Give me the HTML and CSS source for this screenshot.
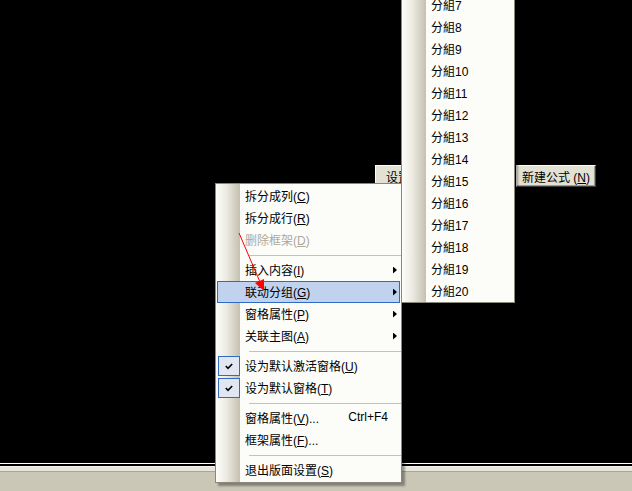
FILE: index.html
```html
<!DOCTYPE html>
<html lang="zh-CN">
<head>
  <meta charset="UTF-8" />
  <title>版面设置</title>
  <link rel="stylesheet" href="styles.css">
</head>
<body>
  <div class="stage">
    <div class="tool-row">
      <button class="tool-btn narrow">设置</button>
      <button class="tool-btn">新建公式 (<u>N</u>)</button>
    </div>

    <div class="menu main-menu">
      <div class="item"><span class="slot"></span><span class="label">拆分成列(<u>C</u>)</span></div>
      <div class="item"><span class="slot"></span><span class="label">拆分成行(<u>R</u>)</span></div>
      <div class="item disabled"><span class="slot"></span><span class="label">删除框架(<u>D</u>)</span></div>
      <div class="sep"></div>
      <div class="item"><span class="slot"></span><span class="label">插入内容(<u>I</u>)</span><span class="more"></span></div>
      <div class="item hover"><span class="slot"></span><span class="label">联动分组(<u>G</u>)</span><span class="more"></span></div>
      <div class="item"><span class="slot"></span><span class="label">窗格属性(<u>P</u>)</span><span class="more"></span></div>
      <div class="item"><span class="slot"></span><span class="label">关联主图(<u>A</u>)</span><span class="more"></span></div>
      <div class="sep"></div>
      <div class="item">
        <span class="slot checked"><svg width="8" height="7" viewBox="0 0 8 7"><path d="M0.8 3 L3 5.3 L7.2 1" fill="none" stroke="#000" stroke-width="1.6"/></svg></span>
        <span class="label">设为默认激活窗格(<u>U</u>)</span>
      </div>
      <div class="item">
        <span class="slot checked"><svg width="8" height="7" viewBox="0 0 8 7"><path d="M0.8 3 L3 5.3 L7.2 1" fill="none" stroke="#000" stroke-width="1.6"/></svg></span>
        <span class="label">设为默认窗格(<u>T</u>)</span>
      </div>
      <div class="sep"></div>
      <div class="item"><span class="slot"></span><span class="label">窗格属性(<u>V</u>)...</span><span class="key">Ctrl+F4</span></div>
      <div class="item"><span class="slot"></span><span class="label">框架属性(<u>F</u>)...</span></div>
      <div class="sep"></div>
      <div class="item"><span class="slot"></span><span class="label">退出版面设置(<u>S</u>)</span></div>
    </div>

    <div class="menu sub-menu">
      <div class="item"><span class="slot"></span><span class="label">分組7</span></div>
      <div class="item"><span class="slot"></span><span class="label">分組8</span></div>
      <div class="item"><span class="slot"></span><span class="label">分組9</span></div>
      <div class="item"><span class="slot"></span><span class="label">分組10</span></div>
      <div class="item"><span class="slot"></span><span class="label">分組11</span></div>
      <div class="item"><span class="slot"></span><span class="label">分組12</span></div>
      <div class="item"><span class="slot"></span><span class="label">分組13</span></div>
      <div class="item"><span class="slot"></span><span class="label">分組14</span></div>
      <div class="item"><span class="slot"></span><span class="label">分組15</span></div>
      <div class="item"><span class="slot"></span><span class="label">分組16</span></div>
      <div class="item"><span class="slot"></span><span class="label">分組17</span></div>
      <div class="item"><span class="slot"></span><span class="label">分組18</span></div>
      <div class="item"><span class="slot"></span><span class="label">分組19</span></div>
      <div class="item"><span class="slot"></span><span class="label">分組20</span></div>
    </div>

    <!-- red annotation arrow drawn over the menu -->
    <svg class="pointer" width="632" height="463" viewBox="0 0 632 463">
      <line x1="239" y1="233" x2="260" y2="282" stroke="#ff0000" stroke-width="1"/>
      <polygon points="264,291 264,279 255,283" fill="#ff0000"/>
    </svg>
  </div>

  <div class="status-bar"></div>
</body>
</html>
```

FILE: styles.css
```css
* {
  margin: 0;
  padding: 0;
  box-sizing: border-box;
}

html, body {
  height: 100%;
  overflow: hidden;
}

body {
  background: #000;
  color: #000;
  font-family: "Liberation Sans", "Noto Sans CJK SC", sans-serif;
  font-size: 12px;
}

.stage {
  position: relative;
  height: 463px;
}

/* toolbar buttons behind the menus */
.tool-row {
  display: flex;
  gap: 113px;
  padding: 165px 0 0 375px;
}

.tool-btn {
  height: 22px;
  padding: 0 5px;
  font: inherit;
  color: #000;
  text-align: left;
  white-space: nowrap;
  overflow: hidden;
  background: #e3e0d4;
  border: 1px solid;
  border-color: #fff #3c3c3c #3c3c3c #fff;
  box-shadow: inset -1px -1px 0 #9d9a8c;
}

.tool-btn.narrow {
  width: 28px;
  padding-left: 10px;
  border-right: none;
  box-shadow: none;
}

/* popup menus */
.menu {
  position: absolute;
  z-index: 2;
  padding: 1px 0;
  background:
    linear-gradient(to right, #fdfdfa 0%, #ebe9e0 45%, #c4c1b0 100%) no-repeat 0 0 / 24px 100%,
    #fcfcf9;
  border: 1px solid #8a877b;
  box-shadow: 3px 3px 2px rgba(0, 0, 0, 0.35);
}

.main-menu {
  left: 215px;
  top: 183px;
  width: 187px;
}

.sub-menu {
  left: 401px;
  top: -9px;
  width: 114px;
  z-index: 3;
}

.item {
  display: flex;
  align-items: center;
  height: 22px;
  margin: 0 1px;
  border: 1px solid transparent;
  white-space: nowrap;
}

.item.hover {
  background: #c1d2ee;
  border-color: #316ac5;
}

.item.disabled {
  color: #aca899;
}

.slot {
  flex: none;
  display: flex;
  align-items: center;
  justify-content: center;
  width: 22px;
  height: 20px;
}

.slot.checked {
  background: #e1e6f1;
  border: 1px solid #316ac5;
}

.label {
  flex: 1;
  padding-left: 5px;
}

.main-menu .label,
.key {
  padding-bottom: 2px;
}

.key {
  margin-right: 11px;
}

.more {
  flex: none;
  display: flex;
  justify-content: flex-end;
  width: 11px;
  padding-right: 2px;
}

.more::after {
  content: "";
  width: 4px;
  height: 7px;
  background: #000;
  clip-path: polygon(0 0, 100% 50%, 0 100%);
}

.sep {
  height: 8px;
  padding: 4px 0 0 33px;
}

.sep::before {
  content: "";
  display: block;
  height: 1px;
  background: #c5c2b2;
}

.pointer {
  position: absolute;
  left: 0;
  top: 0;
  z-index: 4;
  pointer-events: none;
}

/* strip at the bottom of the window */
.status-bar {
  height: 28px;
  border-top: 1px solid #fff;
  background: linear-gradient(to bottom,
    #000 0 2px,
    #f5f4ef 2px 3px,
    #e8e6dc 3px 7px,
    #a9a697 7px 8px,
    #cac7b7 8px);
}
```
